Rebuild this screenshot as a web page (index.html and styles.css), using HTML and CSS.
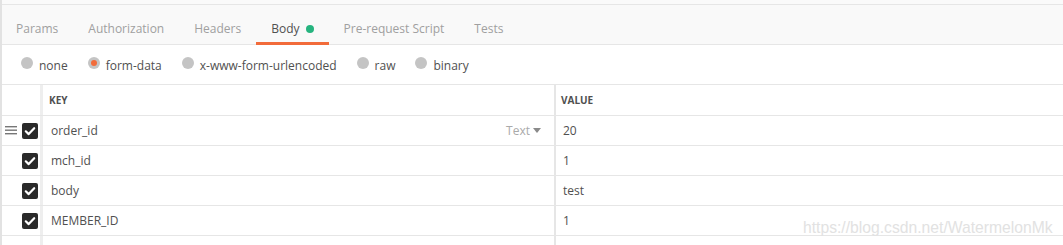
FILE: index.html
```html
<!DOCTYPE html>
<html>
<head>
<meta charset="utf-8">
<link rel="stylesheet" href="styles.css">
</head>
<body>
<div class="page">
  <div class="topstrip"></div>
  <div class="tabbar">
    <div class="tabs">
      <div class="tab">Params</div>
      <div class="tab">Authorization</div>
      <div class="tab">Headers</div>
      <div class="tab active">Body<span class="dot"></span></div>
      <div class="tab">Pre-request Script</div>
      <div class="tab">Tests</div>
    </div>
  </div>
  <div class="radios">
    <label class="radio"><span class="circle"></span><span>none</span></label>
    <label class="radio"><span class="circle on"></span><span>form-data</span></label>
    <label class="radio"><span class="circle"></span><span>x-www-form-urlencoded</span></label>
    <label class="radio"><span class="circle"></span><span>raw</span></label>
    <label class="radio"><span class="circle"></span><span>binary</span></label>
  </div>
  <div class="table">
    <div class="row head">
      <div class="c-handle"></div>
      <div class="c-key">KEY</div>
      <div class="c-val">VALUE</div>
    </div>
    <div class="row">
      <div class="c-handle">
        <svg class="drag" width="12" height="9" viewBox="0 0 12 9"><rect x="0" y="0" width="12" height="1.4" fill="#777"/><rect x="0" y="3.5" width="12" height="1.4" fill="#777"/><rect x="0" y="7" width="12" height="1.4" fill="#777"/></svg>
        <span class="check"><svg width="16" height="16" viewBox="0 0 16 16"><path d="M3.8 8.3 L6.7 11.1 L12.2 5.2" fill="none" stroke="#fff" stroke-width="2.2" stroke-linecap="round" stroke-linejoin="round"/></svg></span>
      </div>
      <div class="c-key"><span>order_id</span><span class="type">Text<svg width="8" height="5" viewBox="0 0 8 5"><path d="M0 0 L8 0 L4 5 Z" fill="#8a8a8a"/></svg></span></div>
      <div class="c-val">20</div>
    </div>
    <div class="row">
      <div class="c-handle">
        <span class="check"><svg width="16" height="16" viewBox="0 0 16 16"><path d="M3.8 8.3 L6.7 11.1 L12.2 5.2" fill="none" stroke="#fff" stroke-width="2.2" stroke-linecap="round" stroke-linejoin="round"/></svg></span>
      </div>
      <div class="c-key">mch_id</div>
      <div class="c-val">1</div>
    </div>
    <div class="row">
      <div class="c-handle">
        <span class="check"><svg width="16" height="16" viewBox="0 0 16 16"><path d="M3.8 8.3 L6.7 11.1 L12.2 5.2" fill="none" stroke="#fff" stroke-width="2.2" stroke-linecap="round" stroke-linejoin="round"/></svg></span>
      </div>
      <div class="c-key">body</div>
      <div class="c-val">test</div>
    </div>
    <div class="row">
      <div class="c-handle">
        <span class="check"><svg width="16" height="16" viewBox="0 0 16 16"><path d="M3.8 8.3 L6.7 11.1 L12.2 5.2" fill="none" stroke="#fff" stroke-width="2.2" stroke-linecap="round" stroke-linejoin="round"/></svg></span>
      </div>
      <div class="c-key">MEMBER_ID</div>
      <div class="c-val">1</div>
    </div>
    <div class="row">
      <div class="c-handle"></div>
      <div class="c-key"></div>
      <div class="c-val"></div>
    </div>
  </div>
  <div class="watermark">https://blog.csdn.net/WatermelonMk</div>
</div>
</body>
</html>
```
FILE: styles.css
```css
html, body {
  margin: 0;
  padding: 0;
  background: #fff;
}
.page {
  position: relative;
  height: 245px;
  overflow: hidden;
  border-left: 2px solid #e2e2e2;
  font-family: "Open Sans", "Liberation Sans", sans-serif;
  font-size: 12px;
  color: #505050;
}
.topstrip {
  height: 4px;
  background: #fafafa;
}
.tabbar {
  background: #f9f9f9;
  border-top: 1px solid #e6e6e6;
  border-bottom: 1px solid #e6e6e6;
}
.tabs {
  display: flex;
  margin-left: -1px;
  margin-bottom: -1px;
}
.tab {
  box-sizing: border-box;
  height: 40px;
  padding: 15px 15px 0;
  line-height: 17px;
  border-bottom: 3px solid transparent;
  color: #a0a0a0;
  display: flex;
  align-items: flex-start;
}
.tab.active {
  color: #505050;
  border-bottom-color: #f26b3a;
}
.dot {
  width: 8px;
  height: 8px;
  border-radius: 50%;
  background: #26b47f;
  margin-left: 6px;
  margin-top: 5px;
}
.radios {
  display: flex;
  gap: 20px;
  padding: 12px 0 10px 19px;
  line-height: 17px;
}
.radio {
  display: flex;
  align-items: flex-start;
  gap: 6px;
}
.circle {
  width: 12px;
  height: 12px;
  border-radius: 50%;
  background: #c4c4c4;
  display: flex;
  align-items: center;
  justify-content: center;
}
.circle.on::after {
  content: "";
  width: 6px;
  height: 6px;
  border-radius: 50%;
  background: #f26b3a;
}
.table {
  border-top: 1px solid #e6e6e6;
}
.row {
  display: flex;
  height: 29px;
  border-bottom: 1px solid #e6e6e6;
  line-height: 29px;
}
.row.head {
  height: 30px;
  line-height: 30px;
  font-size: 10px;
  font-weight: 700;
  color: #505050;
}
.c-handle {
  box-sizing: border-box;
  width: 38px;
  display: flex;
  align-items: center;
  padding: 0 2px 0 3px;
}
.drag {
  display: block;
}
.check {
  margin-left: auto;
  width: 16px;
  height: 16px;
  border-radius: 2px;
  background: #2a2a2a;
  display: block;
}
.check svg {
  display: block;
}
.c-key {
  box-sizing: border-box;
  width: 514px;
  border-left: 3px solid #eeeeee;
  padding-left: 8px;
  padding-right: 13px;
  display: flex;
}
.head .c-key {
  padding-left: 6px;
}
.type {
  margin-left: auto;
  color: #aaaaaa;
  display: flex;
  align-items: center;
  gap: 3px;
}
.type svg {
  display: block;
  margin-top: -1px;
}
.c-val {
  flex: 1;
  border-left: 2px solid #e6e6e6;
  padding-left: 7px;
}
.head .c-val {
  padding-left: 5px;
}
.watermark {
  position: absolute;
  left: 801px;
  top: 220px;
  font-family: "Liberation Sans", Arial, sans-serif;
  font-size: 15.7px;
  line-height: 16px;
  color: #e2e2e2;
  white-space: nowrap;
}
```
